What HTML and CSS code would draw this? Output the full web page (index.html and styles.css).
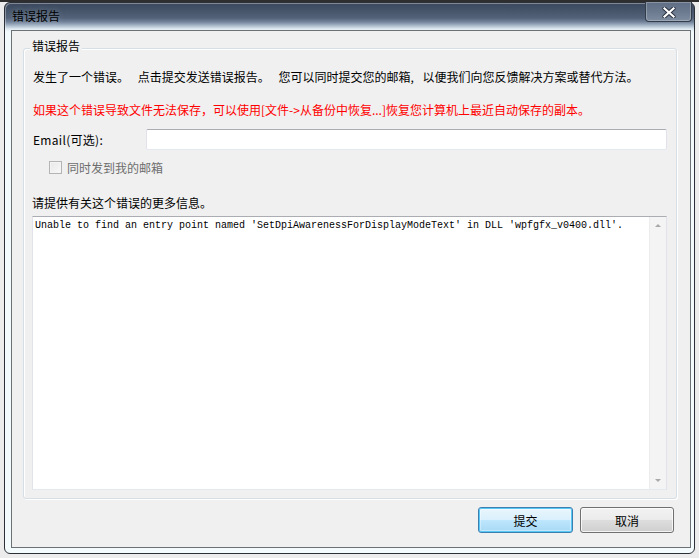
FILE: index.html
```html
<!DOCTYPE html>
<html lang="zh-CN">
<head>
<meta charset="utf-8">
<title>错误报告</title>
<link rel="stylesheet" href="styles.css">
</head>
<body>
<div class="window">
  <div class="titlebar">
    <span class="title">错误报告</span>
    <button class="close" aria-label="关闭">
      <svg width="14" height="11" viewBox="0 0 14 11">
        <path d="M2.5 1.5 L11.5 9.5 M11.5 1.5 L2.5 9.5" stroke="#2a3240" stroke-width="4.2" stroke-linecap="round" fill="none"/>
        <path d="M2.5 1.5 L11.5 9.5 M11.5 1.5 L2.5 9.5" stroke="#ffffff" stroke-width="2.2" stroke-linecap="square" fill="none"/>
      </svg>
    </button>
  </div>
  <div class="client">
    <section class="group">
      <h2 class="group-title">错误报告</h2>
      <p class="msg">发生了一个错误。 点击提交发送错误报告。 您可以同时提交您的邮箱, 以便我们向您反馈解决方案或替代方法。</p>
      <p class="warn">如果这个错误导致文件无法保存，可以使用[文件-&gt;从备份中恢复...]恢复您计算机上最近自动保存的副本。</p>
      <div class="email-row">
        <label class="email-label">Email(可选):</label>
        <div class="textbox"></div>
      </div>
      <div class="check-row">
        <span class="checkbox"></span>
        <span class="check-label">同时发到我的邮箱</span>
      </div>
      <p class="prompt">请提供有关这个错误的更多信息。</p>
      <div class="memo">
        <div class="memo-text">Unable to find an entry point named 'SetDpiAwarenessForDisplayModeText' in DLL 'wpfgfx_v0400.dll'.</div>
        <div class="vscroll">
          <span class="arrow up"></span>
          <span class="arrow down"></span>
        </div>
      </div>
    </section>
    <div class="buttons">
      <button class="btn default">提交</button>
      <button class="btn">取消</button>
    </div>
  </div>
</div>
</body>
</html>
```

FILE: styles.css
```css
* { box-sizing: border-box; }

html, body {
  margin: 0;
  height: 100%;
}

body {
  padding: 2px 0 0 4px;
  background: linear-gradient(to bottom, #2e2e2e 0, #2e2e2e 2px, #ececec 2px, #ececec 100%);
  font-family: "Noto Sans CJK SC", "Noto Sans", sans-serif;
  font-size: 12px;
  color: #000;
  overflow: hidden;
}

.window {
  width: 691px;
  height: 552px;
  border: 1px solid #2b3038;
  border-radius: 6px;
  padding: 0 3px 5px 6px;
  display: flex;
  flex-direction: column;
  background: linear-gradient(to bottom,
    #3b485d 0px, #465569 8px, #536279 15px, #74849b 19px,
    #b0bfcf 23px, #e0ebf2 26px, #f1f9fb 29px, #f3fafc 60px, #f3fbfc 100%);
  box-shadow: inset 1px 1px 0 rgba(255,255,255,0.35);
}

.titlebar {
  height: 27px;
  display: flex;
  align-items: flex-start;
  justify-content: space-between;
}

.title {
  margin: 5px 0 0 1px;
  line-height: 16px;
  text-shadow: 0 0 6px rgba(220,235,245,0.35);
}

.close {
  width: 47px;
  height: 20px;
  margin: -1px -1px 0 0;
  padding: 0;
  border: 1px solid #323c4a;
  border-top: none;
  border-radius: 0 0 4px 4px;
  background: linear-gradient(to bottom, #5f6e84 0%, #6b7a8f 50%, #7e8ca0 100%);
  box-shadow: inset 0 0 0 1px rgba(255,255,255,0.25);
  display: flex;
  align-items: center;
  justify-content: center;
}

.close svg { display: block; margin-top: 1px; }

.client {
  flex: 1;
  border: 1px solid #6c7176;
  background: #f0f0f0;
  display: flex;
  flex-direction: column;
  padding: 0 16px 13px 0;
}

.group {
  margin: 17px -3px 0 11px;
  padding: 0 9px 8px 8px;
  border: 1px solid #d5dfe5;
  border-radius: 3px;
  box-shadow: inset 1px 1px 0 #fff, 1px 1px 0 #fff;
}

.group-title {
  width: fit-content;
  margin: -10px 0 0 -2px;
  padding: 0 2px;
  background: #f0f0f0;
  font-size: 12px;
  font-weight: normal;
  line-height: 14px;
}

.msg, .warn, .prompt {
  margin: 0;
  line-height: 16px;
  white-space: nowrap;
}

.msg, .warn { padding-left: 1px; }

.msg {
  margin-top: 16px;
  word-spacing: 6px;
}

.warn {
  margin-top: 17px;
  color: #ff0000;
}

.email-row {
  margin-top: 11px;
  display: flex;
  align-items: center;
  height: 21px;
  padding-left: 1px;
}

.email-label {
  width: 113px;
  flex: none;
  letter-spacing: 0.3px;
}

.textbox {
  flex: 1;
  height: 21px;
  background: #fff;
  border: 1px solid #e2e3ea;
  border-top-color: #abadb3;
  border-bottom-color: #e3e9ef;
  border-radius: 2px;
}

.check-row {
  margin-top: 9px;
  display: flex;
  align-items: center;
  height: 16px;
  padding-left: 17px;
  gap: 5px;
}

.checkbox {
  width: 13px;
  height: 13px;
  border: 1px solid #b4b4b4;
  background: linear-gradient(135deg, #e8e8e8, #f8f8f8);
  box-shadow: inset 0 0 0 1px #f4f4f4;
}

.check-label { color: #6d6d6d; }

.prompt { margin-top: 20px; }

.memo {
  margin-top: 5px;
  height: 274px;
  display: flex;
  background: #fff;
  border: 1px solid #e2e3ea;
  border-top-color: #abadb3;
  border-bottom-color: #e3e9ef;
}

.memo-text {
  flex: 1;
  padding: 2px 0 0 2px;
  font-family: "Liberation Mono", "DejaVu Sans Mono", monospace;
  font-size: 10px;
  line-height: 14px;
  white-space: nowrap;
  overflow: hidden;
}

.vscroll {
  width: 17px;
  flex: none;
  background: #f4f4f4;
  border-left: 1px solid #ececec;
  display: flex;
  flex-direction: column;
  justify-content: space-between;
  align-items: center;
  padding: 7px 0 7px;
}

.arrow {
  width: 0;
  height: 0;
  border-left: 3px solid transparent;
  border-right: 3px solid transparent;
}

.arrow.up { border-bottom: 3px solid #a9a9a9; }
.arrow.down { border-top: 3px solid #a9a9a9; }

.buttons {
  margin-top: 8px;
  display: flex;
  justify-content: flex-end;
  gap: 7px;
}

.btn {
  width: 94px;
  height: 26px;
  padding: 0;
  font-family: "Noto Sans CJK SC", "Noto Sans", sans-serif;
  font-size: 12px;
  color: #000;
  border: 1px solid #707070;
  border-radius: 3px;
  background: linear-gradient(to bottom, #f2f2f2 0%, #ebebeb 50%, #dddddd 51%, #cfcfcf 100%);
  box-shadow: inset 0 0 0 1px rgba(255,255,255,0.75);
}

.btn.default {
  width: 95px;
  border-color: #3c7fb1;
  background: linear-gradient(to bottom, #eaf6fd 0%, #d9f0fc 50%, #bee6fd 51%, #a7d9f5 100%);
  box-shadow: inset 0 0 0 1px #58c8f6, inset 0 0 0 2px rgba(255,255,255,0.35);
}
```
